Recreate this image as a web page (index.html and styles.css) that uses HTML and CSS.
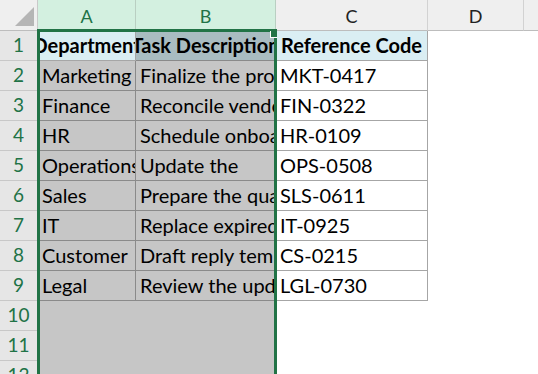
FILE: index.html
```html
<!DOCTYPE html>
<html>
<head>
<meta charset="utf-8">
<link rel="stylesheet" href="styles.css">
</head>
<body>
<div class="sheet">
  <div class="corner"><span class="tri"></span></div>
  <div class="ch sel">A</div>
  <div class="ch sel">B</div>
  <div class="ch">C</div>
  <div class="ch">D</div>
  <div class="ch last"></div>

  <div class="rh">1</div>
  <div class="c tb hd active"><span>Department</span></div>
  <div class="c tb hd s hs"><span>Task Description</span></div>
  <div class="c tb hd tc"><span>Reference Code</span></div>
  <div class="c"></div><div class="c"></div>

  <div class="rh">2</div>
  <div class="c tb s"><span>Marketing</span></div>
  <div class="c tb s"><span>Finalize the product launch brief</span></div>
  <div class="c tb tc"><span>MKT-0417</span></div>
  <div class="c"></div><div class="c"></div>

  <div class="rh">3</div>
  <div class="c tb s"><span>Finance</span></div>
  <div class="c tb s"><span>Reconcile vendor invoices</span></div>
  <div class="c tb tc"><span>FIN-0322</span></div>
  <div class="c"></div><div class="c"></div>

  <div class="rh">4</div>
  <div class="c tb s"><span>HR</span></div>
  <div class="c tb s"><span>Schedule onboarding sessions</span></div>
  <div class="c tb tc"><span>HR-0109</span></div>
  <div class="c"></div><div class="c"></div>

  <div class="rh">5</div>
  <div class="c tb s"><span>Operations</span></div>
  <div class="c tb s"><span>Update the</span></div>
  <div class="c tb tc"><span>OPS-0508</span></div>
  <div class="c"></div><div class="c"></div>

  <div class="rh">6</div>
  <div class="c tb s"><span>Sales</span></div>
  <div class="c tb s"><span>Prepare the quarterly forecast</span></div>
  <div class="c tb tc"><span>SLS-0611</span></div>
  <div class="c"></div><div class="c"></div>

  <div class="rh">7</div>
  <div class="c tb s"><span>IT</span></div>
  <div class="c tb s"><span>Replace expired certificates</span></div>
  <div class="c tb tc"><span>IT-0925</span></div>
  <div class="c"></div><div class="c"></div>

  <div class="rh">8</div>
  <div class="c tb s"><span>Customer</span></div>
  <div class="c tb s"><span>Draft reply templates</span></div>
  <div class="c tb tc"><span>CS-0215</span></div>
  <div class="c"></div><div class="c"></div>

  <div class="rh">9</div>
  <div class="c tb s"><span>Legal</span></div>
  <div class="c tb s"><span>Review the updated contract</span></div>
  <div class="c tb tc"><span>LGL-0730</span></div>
  <div class="c"></div><div class="c"></div>

  <div class="rh">10</div>
  <div class="c s"></div><div class="c s"></div>
  <div class="c"></div><div class="c"></div><div class="c"></div>

  <div class="rh">11</div>
  <div class="c s"></div><div class="c s"></div>
  <div class="c"></div><div class="c"></div><div class="c"></div>

  <div class="rh">12</div>
  <div class="c s"></div><div class="c s"></div>
  <div class="c"></div><div class="c"></div><div class="c"></div>

  <div class="selection"><span class="handle"></span></div>
</div>
</body>
</html>
```

FILE: styles.css
```css
html, body {
  margin: 0;
  padding: 0;
  background: #ffffff;
  overflow: hidden;
}

.sheet {
  position: relative;
  display: grid;
  grid-template-columns: 38px 98px 140px 152px 96px 1fr;
  grid-template-rows: 31px;
  grid-auto-rows: 30px;
  width: 538px;
  height: 374px;
  overflow: hidden;
  font-family: Lato, "Liberation Sans", sans-serif;
}

.corner {
  position: relative;
  background: #efefef;
  border-right: 1px solid #c9c9c9;
  border-bottom: 1px solid #bdbdbd;
  box-sizing: border-box;
}

.tri {
  position: absolute;
  right: 3px;
  bottom: 4px;
  width: 0;
  height: 0;
  border-left: 19px solid transparent;
  border-bottom: 19px solid #b5b5b5;
}

.ch {
  box-sizing: border-box;
  background: #efefef;
  border-right: 1px solid #d2d2d2;
  border-bottom: 1px solid #bdbdbd;
  color: #222;
  font-size: 18px;
  display: flex;
  align-items: flex-end;
  justify-content: center;
  padding-bottom: 4px;
  line-height: 20px;
}

.ch.sel {
  background: #d3f0e0;
  color: #217346;
  border-right-color: #b9cfc2;
  border-bottom: 2px solid #217346;
  padding-bottom: 3px;
}

.ch.last {
  border-right: none;
}

.rh {
  box-sizing: border-box;
  background: #e6e6e6;
  color: #217346;
  border-right: 1px solid #bdbdbd;
  border-bottom: 1px solid #c8c8c8;
  font-size: 19px;
  display: flex;
  align-items: flex-end;
  justify-content: center;
  padding-bottom: 4px;
  line-height: 22px;
}

.c {
  box-sizing: border-box;
  background: #ffffff;
  color: #000;
  font-size: 20px;
  display: flex;
  align-items: flex-end;
  padding: 0 4px 3px 4px;
  line-height: 24px;
  white-space: nowrap;
  overflow: hidden;
}

.c span {
  flex: none;
}

.c.s {
  background: #c6c6c6;
}

.c.tb {
  border-right: 1px solid #a6a6a6;
  border-bottom: 1px solid #a6a6a6;
}

.c.tb.s {
  border-right-color: #8a8a8a;
  border-bottom-color: #8a8a8a;
}

.c.hd {
  font-weight: 700;
  justify-content: center;
  padding-left: 0;
  padding-right: 0;
}

.c.hd.tc,
.c.hd.active {
  background: #daeef3;
}

.c.hd.hs {
  background: #a9bcc1;
}

.selection {
  position: absolute;
  left: 37px;
  top: 29px;
  width: 240px;
  height: 360px;
  box-sizing: border-box;
  border: 3px solid #217346;
  pointer-events: none;
}

.handle {
  position: absolute;
  right: -3px;
  top: -1px;
  width: 6px;
  height: 6px;
  background: #217346;
  border-left: 1px solid #ffffff;
  border-bottom: 1px solid #ffffff;
}
```
